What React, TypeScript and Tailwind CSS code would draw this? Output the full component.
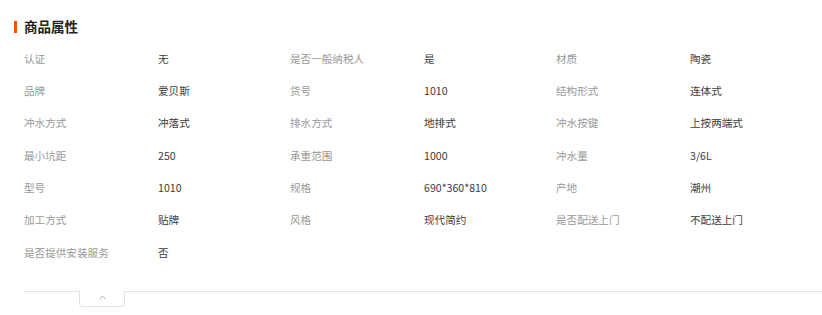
import { Fragment } from 'react';
import { ChevronUp } from 'lucide-react';

const rows: [string, string][][] = [
  [['认证', '无'], ['是否一般纳税人', '是'], ['材质', '陶瓷']],
  [['品牌', '爱贝斯'], ['货号', '1010'], ['结构形式', '连体式']],
  [['冲水方式', '冲落式'], ['排水方式', '地排式'], ['冲水按键', '上按两端式']],
  [['最小坑距', '250'], ['承重范围', '1000'], ['冲水量', '3/6L']],
  [['型号', '1010'], ['规格', '690*360*810'], ['产地', '潮州']],
  [['加工方式', '贴牌'], ['风格', '现代简约'], ['是否配送上门', '不配送上门']],
  [['是否提供安装服务', '否']],
];

export default function App() {
  return (
    <div
      className="w-[822px] h-[315px] bg-white overflow-hidden"
      style={{ fontFamily: '"Noto Sans CJK SC", "Liberation Sans", sans-serif' }}
    >
      {/* Title */}
      <div className="flex items-center pt-[20px] pl-[14px] h-[34px]">
        <span className="w-[3px] h-[12px] bg-[#ff4f00] mr-[7px]" />
        <h2 className="text-[13.5px] font-bold text-[#222] leading-none">商品属性</h2>
      </div>

      {/* Attributes */}
      <div className="pl-6 pt-[9px]">
        {rows.map((row, i) => (
          <div key={i} className="grid grid-cols-[134px_132px_134px_132px_134px_1fr] h-[32.3px] items-center text-[10.6px] leading-none">
            {row.map(([k, v]) => (
              <Fragment key={k}>
                <span className="text-[#999]">{k}</span>
                <span className="text-[#3c3c3c]">{v}</span>
              </Fragment>
            ))}
          </div>
        ))}
      </div>

      {/* Collapse bar */}
      <div className="ml-[23px] mt-[22px] border-t border-[#e3e3e3]">
        <button className="ml-[56px] -mt-px w-[46px] h-[16px] border border-t-0 border-[#e3e3e3] rounded-b-[4px] bg-white flex items-start justify-center pt-[1px]">
          <ChevronUp className="w-[11px] h-[11px] text-[#8a8fa0]" strokeWidth={1.8} />
        </button>
      </div>
    </div>
  );
}
